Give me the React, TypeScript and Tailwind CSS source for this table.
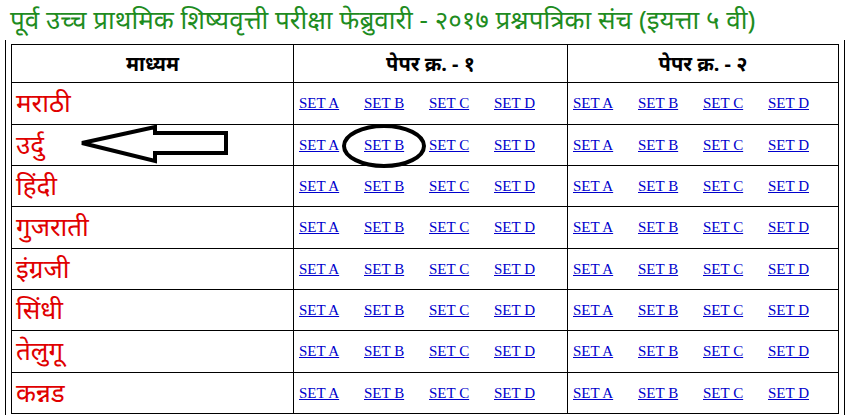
import React from "react";

const mediums = ["मराठी", "उर्दु", "हिंदी", "गुजराती", "इंग्रजी", "सिंधी", "तेलुगू", "कन्नड"];
const sets = ["SET A", "SET B", "SET C", "SET D"];
const rowHeights = ["h-[42px]", "h-[41px]", "h-[41px]", "h-[42px]", "h-[41px]", "h-[41px]", "h-[42px]", "h-[41px]"];

// the hand-drawn marks over the urdu row
const Arrow = () => (
  <svg className="absolute left-[80px] top-[125px]" width="152" height="40" viewBox="0 0 152 40">
    <path
      d="M2 18 L75 2 L75 8 L146 8 L146 28 L75 28 L75 36 Z"
      fill="none"
      stroke="black"
      strokeWidth="4"
      strokeLinejoin="miter"
    />
  </svg>
);

const Ring = () => (
  <svg className="absolute left-[341px] top-[123px]" width="86" height="46" viewBox="0 0 86 46">
    <ellipse cx="43" cy="23" rx="40" ry="20" fill="none" stroke="black" strokeWidth="4" />
  </svg>
);

const SetLinks = () => (
  <div className="flex gap-[23px] pl-[5px]">
    {sets.map((s) => (
      <a key={s} href="#" className="w-[42px] whitespace-nowrap text-[15px] text-[#0000cc] underline">
        {s}
      </a>
    ))}
  </div>
);

const App: React.FC = () => {
  return (
    <div className="relative w-[845px] h-[415px] overflow-hidden bg-white font-['Noto_Sans',sans-serif]">
      <h1 className="h-[40px] pl-[10px] pt-[2px] text-[26px] leading-[34px] text-[#1e8c1e] whitespace-nowrap">
        पूर्व उच्च प्राथमिक शिष्यवृत्ती परीक्षा फेब्रुवारी - २०१७ प्रश्नपत्रिका संच (इयत्ता ५ वी)
      </h1>
      <div className="ml-[5px] w-[840px] h-[380px] border-l border-r border-black pl-[5px] pt-[4px]">
        <table className="w-[828px] border-collapse border border-black">
          <thead>
            <tr className="h-[38px]">
              <th className="w-[282px] border border-black text-[20px] font-bold text-black">माध्यम</th>
              <th className="w-[274px] border border-black text-[20px] font-bold text-black">पेपर क्र. - १</th>
              <th className="border border-black text-[20px] font-bold text-black">पेपर क्र. - २</th>
            </tr>
          </thead>
          <tbody>
            {mediums.map((m, i) => (
              <tr key={m} className={rowHeights[i]}>
                <td className="border border-black pl-[4px] pb-[3px] text-[26px] leading-[32px] text-[#e00000]">{m}</td>
                <td className="border border-black font-['Liberation_Serif',serif]">
                  <SetLinks />
                </td>
                <td className="border border-black font-['Liberation_Serif',serif]">
                  <SetLinks />
                </td>
              </tr>
            ))}
          </tbody>
        </table>
      </div>
      <Arrow />
      <Ring />
    </div>
  );
};

export default App;
